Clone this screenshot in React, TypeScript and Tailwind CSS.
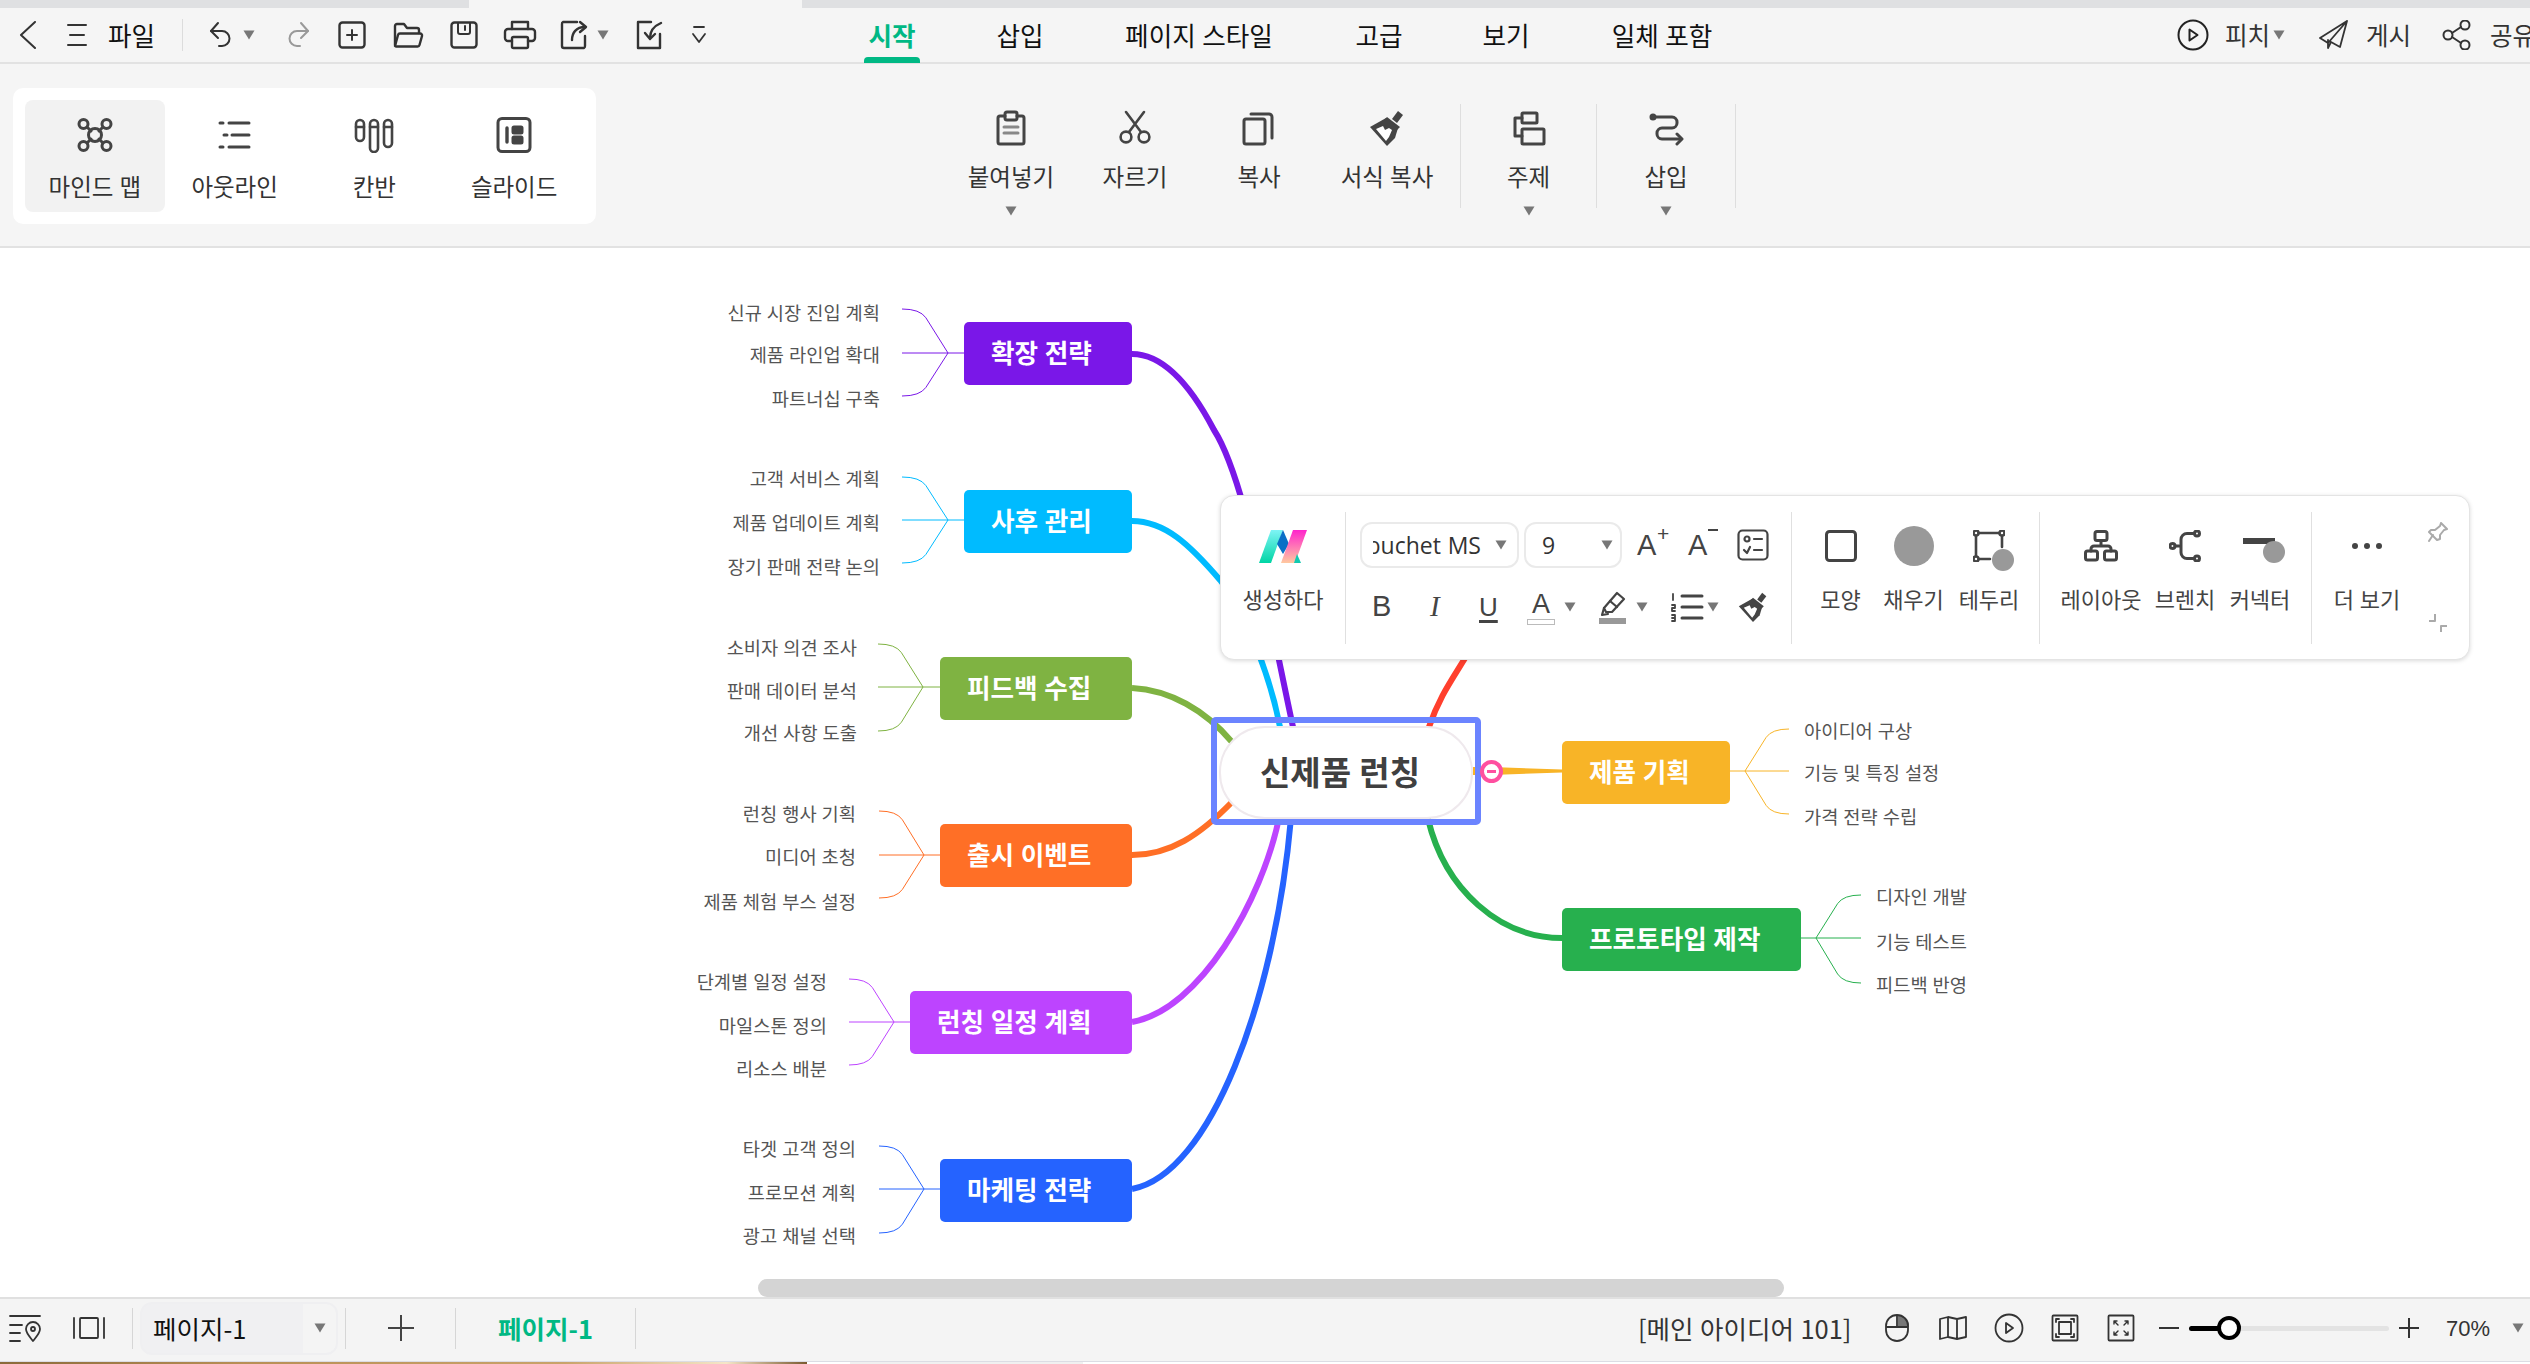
import React from "react";

const Caret = ({ className = "" }: { className?: string }) => (
  <svg viewBox="0 0 12 10" className={"w-[12px] h-[10px] shrink-0 " + className}>
    <path d="M0.5 0.5H11.5L6 9.5Z" fill="#777" />
  </svg>
);

type IP = { className?: string; children: React.ReactNode; w?: number; h?: number; stroke?: string; sw?: number };
const I = ({ className = "", children, w = 36, h = 36, stroke = "#444", sw = 2.4 }: IP) => (
  <svg viewBox={`0 0 ${w} ${h}`} width={w} height={h} fill="none" stroke={stroke} strokeWidth={sw} strokeLinecap="round" strokeLinejoin="round" className={"shrink-0 " + className}>
    {children}
  </svg>
);

const MindIcon = () => (
  <I sw={3}>
    <circle cx="18" cy="18" r="6.500" />
    <circle cx="6.500" cy="7" r="4.500" /><circle cx="29.500" cy="7" r="4.500" /><circle cx="6.500" cy="29" r="4.500" /><circle cx="29.500" cy="29" r="4.500" />
    <path d="M10 10l4 4M26 10l-4 4M10 26l4-4M26 26l-4-4" />
  </I>
);
const OutlineIcon = () => (
  <I>
    <g stroke="#444" strokeWidth="3">
      <path d="M3 6h3M12 6h20M7 18h3M15 18h17M3 30h3M12 30h20" />
    </g>
  </I>
);
const KanbanIcon = () => (
  <I w={42} sw={2.600}>
    <rect x="3" y="3" width="8" height="21" rx="4" /><rect x="17" y="3" width="8" height="32" rx="4" /><rect x="31" y="3" width="8" height="27" rx="4" />
    <path d="M3 10h8M17 10h8M31 10h8" />
  </I>
);
const SlideIcon = () => (
  <I sw={3}>
    <rect x="2" y="1.500" width="32" height="33" rx="4" />
    <path d="M11 11v14" strokeWidth="3.400" />
    <rect x="17" y="10" width="9" height="6" fill="#444" rx="1" /><rect x="17" y="20" width="9" height="6" fill="#444" rx="1" />
  </I>
);
const PasteIcon = () => (
  <I sw={3}>
    <path d="M12 6H7a2 2 0 0 0-2 2v24a2 2 0 0 0 2 2h22a2 2 0 0 0 2-2V8a2 2 0 0 0-2-2h-5" />
    <rect x="12" y="2" width="12" height="8" rx="2" />
    <path d="M11 17h14M11 23h14" stroke="#888" />
  </I>
);
const CutIcon = () => (
  <I sw={2.600}>
    <circle cx="9" cy="27" r="5.400" /><circle cx="27" cy="27" r="5.400" />
    <path d="M12 22L27 2M24 22L9 2" />
  </I>
);
const CopyIcon = () => (
  <I sw={3}>
    <rect x="3" y="9" width="21" height="25" rx="2" />
    <path d="M10 4h18a3 3 0 0 1 3 3v21" />
  </I>
);
const BrushIcon = ({ size = 36 }: { size?: number }) => (
  <svg viewBox="0 0 36 36" width={size} height={size} className="shrink-0">
    <path d="M29 1l5 4-6 8-5-4z" fill="#444" />
    <path d="M18 7l13 10-3 3L15 10z" fill="#444" />
    <path d="M1 17L17 8l12 10-3 10-8 8z" fill="#444" />
    <path d="M7 19l7-3 2 4 4-2 3 2-3 7-3 4z" fill="#fff" />
  </svg>
);
const TopicIcon = () => (
  <I sw={3}>
    <rect x="11" y="3" width="15" height="10" rx="1" />
    <rect x="11" y="19" width="22" height="15" rx="1" stroke="#444" />
    <path d="M11 8H4v18h7" />
  </I>
);
const InsertIcon = () => (
  <I sw={3}>
    <circle cx="5" cy="7" r="2" fill="#444" />
    <path d="M5 7h19a5 5 0 0 1 5 5v1a5 5 0 0 1-5 5H14a5 5 0 0 0-5 5v1a5 5 0 0 0 5 5h18" />
    <path d="M29 24l5 5-5 5" />
  </I>
);

const ribbonModes = [
  { label: "마인드 맵", icon: <MindIcon />, box: "bg-[#f2f2f2]" },
  { label: "아웃라인", icon: <OutlineIcon />, box: "" },
  { label: "칸반", icon: <KanbanIcon />, box: "" },
  { label: "슬라이드", icon: <SlideIcon />, box: "" },
];

const Tool = ({ w, icon, label, caret }: { w: string; icon: React.ReactNode; label: string; caret?: boolean }) => (
  <div className={"flex flex-col items-center " + w}>
    <div className="h-[48px] flex items-center justify-center">{icon}</div>
    <div className="h-[52px] flex items-center pb-[3px] text-[23.500px] text-[#333] whitespace-nowrap">{label}</div>
    <div className="h-[14px] flex items-center">{caret && <Caret />}</div>
  </div>
);
const VDiv = () => <div className="w-[1px] h-[104px] bg-[#dedede] shrink-0" />;

const Tab = ({ w, ml, label, active }: { w: string; ml: string; label: string; active?: boolean }) => (
  <div className={`relative h-[54px] flex items-center justify-center whitespace-nowrap text-[25.600px] ${w} ${ml} ${active ? "text-[#00b884] font-bold" : "text-[#111]"}`}>
    {label}
    {active && <div className="absolute left-0 right-0 bottom-[-1px] h-[6px] rounded-t-[4px] bg-[#00b884]" />}
  </div>
);

const TitleBar = () => (
  <div className="h-[56px] shrink-0 bg-[#f5f5f5] border-b-2 border-[#e2e2e2] flex items-center">
    <div className="w-[56px] flex justify-center">
      <I w={20} h={28} stroke="#333" sw={2}><path d="M17 1L3 14l14 13" /></I>
    </div>
    <div className="w-[42px] flex justify-center">
      <I w={22} h={24} stroke="#333" sw={2}><path d="M2 2h18M4 12h14M2 22h18" /></I>
    </div>
    <div className="ml-[10px] w-[48px] text-[25.600px] text-[#111] whitespace-nowrap">파일</div>
    <div className="ml-[26px] w-[1px] h-[32px] bg-[#dcdcdc]" />
    <div className="ml-[19px] w-[40px] flex justify-center">
      <I w={28} h={28} stroke="#333" sw={2}><path d="M10 2L3 10l7 7" /><path d="M3 10h11a7.500 7.500 0 0 1 0 15h-3" /></I>
    </div>
    <Caret className="mx-[1px]" />
    <div className="ml-[21px] w-[40px] flex justify-center">
      <I w={28} h={28} stroke="#999" sw={2}><path d="M18 2l7 8-7 7" /><path d="M25 10H14a7.500 7.500 0 0 0 0 15h3" /></I>
    </div>
    <div className="ml-[15px] flex gap-[16px] items-center">
      <div className="w-[40px] flex justify-center">
        <I w={28} h={28} stroke="#333"><rect x="1.500" y="1.500" width="25" height="25" rx="3" /><path d="M14 9v10M9 14h10" strokeWidth="2" /></I>
      </div>
      <div className="w-[40px] flex justify-center">
        <I w={32} h={28} stroke="#333"><path d="M3 24V5a2 2 0 0 1 2-2h7l3 4h10a2 2 0 0 1 2 2v3" /><path d="M3 25l3-11a2 2 0 0 1 2-1.500h20a2 2 0 0 1 2 2.500l-2.500 9a2 2 0 0 1-2 1.500H5a2 2 0 0 1-2-.5z" /></I>
      </div>
      <div className="w-[40px] flex justify-center">
        <I w={28} h={28} stroke="#333"><rect x="1.500" y="1.500" width="25" height="25" rx="3" /><path d="M8 2v9a2 2 0 0 0 2 2h8a2 2 0 0 0 2-2V2M15 5v4" strokeWidth="2" /></I>
      </div>
      <div className="w-[40px] flex justify-center">
        <I w={34} h={30} stroke="#333"><path d="M9 9V2h16v7" /><path d="M9 21H5a3 3 0 0 1-3-3v-6a3 3 0 0 1 3-3h24a3 3 0 0 1 3 3v6a3 3 0 0 1-3 3h-4" /><rect x="9" y="17" width="16" height="11" rx="1.500" /></I>
      </div>
      <div className="w-[40px] flex justify-center">
        <I w={32} h={30} stroke="#333"><path d="M17 2H3a2 2 0 0 0-1 2v22a2 2 0 0 0 2 2h20a2 2 0 0 0 1-2V16" /><path d="M12 20c0-7 4-13 13-13" /><path d="M20 2l6 5-6 5" /></I>
      </div>
    </div>
    <Caret className="ml-[1px] mr-[3px]" />
    <div className="ml-[18px] w-[40px] flex justify-center">
      <I w={30} h={30} stroke="#333"><path d="M16 2H3v26h22V14" /><path d="M26 3c-7 3-11 7-11 15" /><path d="M10 13l5 6 5-5" /></I>
    </div>
    <div className="ml-[17px] w-[24px] flex justify-center">
      <I w={16} h={20} stroke="#333" sw={1.800}><path d="M3 2h10M2 9l6 8 6-8" /></I>
    </div>
    <Tab w="w-[56px]" ml="ml-[153px]" label="시작" active />
    <Tab w="w-[56px]" ml="ml-[72px]" label="삽입" />
    <Tab w="w-[160px]" ml="ml-[71px]" label="페이지 스타일" />
    <Tab w="w-[56px]" ml="ml-[72px]" label="고급" />
    <Tab w="w-[56px]" ml="ml-[71px]" label="보기" />
    <Tab w="w-[110px]" ml="ml-[73px]" label="일체 포함" />
    <div className="ml-auto w-[353px] flex items-center text-[24.500px] text-[#333] whitespace-nowrap overflow-hidden">
      <I w={32} h={32} stroke="#222" sw={2}><circle cx="16" cy="16" r="14.500" /><path d="M12.500 10.500v11l8-5.500z" /></I>
      <span className="ml-[16px] w-[44px]">피치</span>
      <Caret className="ml-[4px]" />
      <div className="ml-[34px] w-[30px] flex justify-center">
        <I w={30} h={30} stroke="#333" sw={1.800}><path d="M28 1L1 18l8 5 19-22-7 26-9-5-3 6v-8" /></I>
      </div>
      <span className="ml-[17px] w-[44px]">게시</span>
      <div className="ml-[32px] w-[30px] flex justify-center">
        <I w={30} h={30} stroke="#333" sw={2}><circle cx="6" cy="15" r="4.500" /><circle cx="23" cy="5" r="4.500" /><circle cx="23" cy="25" r="4.500" /><path d="M10 13l9-6M10 17l9 6" /></I>
      </div>
      <span className="ml-[18px]">공유</span>
    </div>
  </div>
);

const Ribbon = () => (
  <div className="h-[184px] shrink-0 bg-[#f5f5f5] border-b-2 border-[#e2e2e2] flex items-start pt-[24px]">
    <div className="ml-[13px] w-[583px] h-[136px] bg-white rounded-[10px] p-[12px] flex">
      {ribbonModes.map((m) => (
        <div key={m.label} className={"w-[140px] h-[112px] rounded-[8px] flex flex-col items-center " + m.box}>
          <div className="h-[70px] flex items-center justify-center">{m.icon}</div>
          <div className="h-[36px] flex items-center pb-[3px] text-[23.500px] text-[#333] whitespace-nowrap">{m.label}</div>
        </div>
      ))}
    </div>
    <div className="ml-[353px] mt-[16px] flex items-start">
      <Tool w="w-[124px]" icon={<PasteIcon />} label="붙여넣기" caret />
      <Tool w="w-[124px]" icon={<CutIcon />} label="자르기" />
      <Tool w="w-[124px]" icon={<CopyIcon />} label="복사" />
      <Tool w="w-[132px]" icon={<BrushIcon />} label="서식 복사" />
      <div className="ml-[7px]"><VDiv /></div>
      <Tool w="w-[135px]" icon={<TopicIcon />} label="주제" caret />
      <VDiv />
      <Tool w="w-[138px]" icon={<InsertIcon />} label="삽입" caret />
      <VDiv />
    </div>
  </div>
);

const nodes = [
  { t: "확장 전략", c: "left-[964px] top-[74px] w-[168px] bg-[#7a17e8]" },
  { t: "사후 관리", c: "left-[964px] top-[242px] w-[168px] bg-[#00bbff]" },
  { t: "피드백 수집", c: "left-[940px] top-[409px] w-[192px] bg-[#7fb342]" },
  { t: "출시 이벤트", c: "left-[940px] top-[576px] w-[192px] bg-[#ff6f26]" },
  { t: "런칭 일정 계획", c: "left-[910px] top-[743px] w-[222px] bg-[#bd44ff]" },
  { t: "마케팅 전략", c: "left-[940px] top-[911px] w-[192px] bg-[#2563ff]" },
  { t: "제품 기획", c: "left-[1562px] top-[493px] w-[168px] bg-[#f8b427]" },
  { t: "프로토타입 제작", c: "left-[1562px] top-[660px] w-[239px] bg-[#27b04e]" },
];

const subs = [
  { t: "신규 시장 진입 계획", c: "right-[1650px] top-[52px]" },
  { t: "제품 라인업 확대", c: "right-[1650px] top-[94px]" },
  { t: "파트너십 구축", c: "right-[1650px] top-[138px]" },
  { t: "고객 서비스 계획", c: "right-[1650px] top-[218px]" },
  { t: "제품 업데이트 계획", c: "right-[1650px] top-[262px]" },
  { t: "장기 판매 전략 논의", c: "right-[1650px] top-[306px]" },
  { t: "소비자 의견 조사", c: "right-[1673px] top-[387px]" },
  { t: "판매 데이터 분석", c: "right-[1673px] top-[430px]" },
  { t: "개선 사항 도출", c: "right-[1673px] top-[472px]" },
  { t: "런칭 행사 기획", c: "right-[1674px] top-[553px]" },
  { t: "미디어 초청", c: "right-[1674px] top-[596px]" },
  { t: "제품 체험 부스 설정", c: "right-[1674px] top-[641px]" },
  { t: "단계별 일정 설정", c: "right-[1703px] top-[721px]" },
  { t: "마일스톤 정의", c: "right-[1703px] top-[765px]" },
  { t: "리소스 배분", c: "right-[1703px] top-[808px]" },
  { t: "타겟 고객 정의", c: "right-[1674px] top-[888px]" },
  { t: "프로모션 계획", c: "right-[1674px] top-[932px]" },
  { t: "광고 채널 선택", c: "right-[1674px] top-[975px]" },
  { t: "아이디어 구상", c: "left-[1804px] top-[470px]" },
  { t: "기능 및 특징 설정", c: "left-[1804px] top-[512px]" },
  { t: "가격 전략 수립", c: "left-[1804px] top-[556px]" },
  { t: "디자인 개발", c: "left-[1876px] top-[636px]" },
  { t: "기능 테스트", c: "left-[1876px] top-[681px]" },
  { t: "피드백 반영", c: "left-[1876px] top-[724px]" },
];

const branches = [
  { d: "M1132 354C1165 354 1192 388 1214 430C1245 478 1270 620 1293 727", s: "#7a17e8" },
  { d: "M1132 521C1165 521 1190 545 1220 580C1240 605 1268 665 1280 727", s: "#00bbff" },
  { d: "M1132 688C1170 690 1205 710 1232 742", s: "#7fb342" },
  { d: "M1132 855C1170 855 1200 835 1232 802", s: "#ff6f26" },
  { d: "M1132 1022C1200 1010 1262 900 1279 818", s: "#bd44ff" },
  { d: "M1132 1189C1210 1175 1275 1000 1291 818", s: "#2563ff" },
  { d: "M1429 727C1440 695 1452 680 1470 650", s: "#ff3f2d" },
  { d: "M1428 819C1445 890 1500 938 1562 938", s: "#27b04e" },
];

const forks = [
  { from: 964, fork: 948, end: 902, cy: 353, a: 309, b: 396, s: "#7a17e8" },
  { from: 964, fork: 948, end: 902, cy: 520, a: 477, b: 563, s: "#00bbff" },
  { from: 940, fork: 923, end: 878, cy: 687, a: 644, b: 731, s: "#7fb342" },
  { from: 940, fork: 924, end: 879, cy: 855, a: 811, b: 898, s: "#ff6f26" },
  { from: 910, fork: 894, end: 849, cy: 1022, a: 979, b: 1065, s: "#bd44ff" },
  { from: 940, fork: 924, end: 879, cy: 1189, a: 1146, b: 1233, s: "#2563ff" },
  { from: 1730, fork: 1745, end: 1789, cy: 771, a: 729, b: 814, s: "#f8b427" },
  { from: 1801, fork: 1816, end: 1861, cy: 938, a: 895, b: 983, s: "#27b04e" },
];

const forkPath = (f: (typeof forks)[number]) => {
  const span = f.fork - f.end;
  const tip = (y: number) =>
    `M${f.end} ${y}Q${f.end + span * 0.39} ${y} ${f.end + span * 0.52} ${y + (f.cy - y) * 0.2}L${f.fork} ${f.cy}`;
  return `M${f.from} ${f.cy}L${f.end} ${f.cy}${tip(f.a)}${tip(f.b)}`;
};

const TBtn = ({ label, w, children }: { label: string; w: string; children: React.ReactNode }) => (
  <div className={"flex flex-col items-center shrink-0 " + w}>
    <div className="h-[74px] flex items-center justify-center">{children}</div>
    <div className="h-[34px] flex items-center pb-[3px] text-[22px] text-[#444] whitespace-nowrap">{label}</div>
  </div>
);
const GreyDot = ({ className }: { className: string }) => <div className={"absolute rounded-full bg-[#999] " + className} />;

const FloatBar = () => (
  <div className="absolute left-[1220px] top-[247px] w-[1250px] h-[165px] bg-white rounded-[14px] border border-[#e4e4e4] shadow-[0_1px_4px_rgba(0,0,0,0.15)] flex items-start pt-[16px]">
    <TBtn label="생성하다" w="w-[124px] -mt-[3px]">
      <svg viewBox="0 0 48 33" width="48" height="33">
        <defs>
          <linearGradient id="g1" x1="0" y1="0" x2="0" y2="1"><stop offset="0" stopColor="#7ef4f6" /><stop offset="1" stopColor="#00d5a4" /></linearGradient>
          <linearGradient id="g2" x1="0" y1="0" x2="0" y2="1"><stop offset="0" stopColor="#ff24cc" /><stop offset="1" stopColor="#ffc9a0" /></linearGradient>
        </defs>
        <path d="M12 0H24L12 33H0Z" fill="url(#g1)" />
        <path d="M24 0L30 14L24 24L18 14Z" fill="#0b6fc6" />
        <path d="M34 0H48L36 33H22Z" fill="url(#g2)" />
        <path d="M38 24L42 33H35Z" fill="#12c9b0" />
      </svg>
    </TBtn>
    <div className="w-[1px] h-[132px] bg-[#e0e0e0] shrink-0" />
    <div className="w-[445px] shrink-0 pl-[14px]">
      <div className="h-[46px] mt-[10px] flex items-center">
        <div className="w-[159px] h-[46px] rounded-[12px] border-2 border-[#eaeaea] flex items-center pl-[11px]">
          <div className="w-[108px] overflow-hidden flex justify-end text-[23px] text-[#333] font-['Open_Sans',sans-serif] whitespace-nowrap">Trebuchet MS</div>
          <Caret className="ml-[14px]" />
        </div>
        <div className="ml-[5px] w-[98px] h-[46px] rounded-[12px] border-2 border-[#eaeaea] flex items-center pl-[16px]">
          <div className="w-[60px] text-[23px] text-[#333] font-['Open_Sans',sans-serif]">9</div>
          <Caret className="-ml-[1px]" />
        </div>
        <div className="ml-[15px] relative w-[36px] text-[#444] text-[29px] font-['Liberation_Sans',sans-serif] leading-none">
          A<span className="absolute left-[20px] -top-[8px] text-[21px]">+</span>
        </div>
        <div className="ml-[15px] relative w-[36px] text-[#444] text-[29px] font-['Liberation_Sans',sans-serif] leading-none">
          A<div className="absolute left-[20px] -top-[2px] w-[10px] h-[2px] bg-[#444]" />
        </div>
        <div className="ml-[13px]">
          <I w={32} h={32} stroke="#444" sw={2.200}><rect x="1.500" y="1.500" width="29" height="29" rx="4" /><circle cx="10" cy="10" r="2.500" /><path d="M17 10h8M7 21l3 3 3-6M17 21h8" /></I>
        </div>
      </div>
      <div className="h-[46px] mt-[16px] flex items-center font-['Liberation_Sans',sans-serif] text-[#444]">
        <span className="ml-[12px] w-[18px] text-[29px]">B</span>
        <span className="ml-[40px] w-[10px] text-[29px] italic font-['Liberation_Serif',serif]">I</span>
        <span className="ml-[39px] w-[22px] text-[26px] underline underline-offset-[4px] decoration-[3px]">U</span>
        <div className="ml-[26px] w-[28px] flex flex-col items-center">
          <span className="text-[27px] leading-[28px]">A</span>
          <div className="w-[28px] h-[6px] border border-[#bbb] mt-[1px]" />
        </div>
        <Caret className="ml-[9px]" />
        <div className="ml-[23px] w-[27px] flex flex-col items-center">
          <I w={26} h={26} sw={2.200}><path d="M17 2l7 6-12 13H6L4 17z" /><path d="M4 17l-2 7 6-1" /><path d="M10 10l7 6" /></I>
          <div className="w-[27px] h-[6px] bg-[#999] mt-[1px]" />
        </div>
        <Caret className="ml-[10px]" />
        <div className="ml-[22px] w-[34px] flex justify-center">
          <I w={34} h={30} sw={3}><path d="M12 4h20M12 15h20M12 26h20" /><path d="M3 2v6M2 13h3v3H2v3h3M2 23h3v6H2M2 26h3" strokeWidth="1.800" /></I>
        </div>
        <Caret className="ml-[3px]" />
        <div className="ml-[19px]"><BrushIcon size={30} /></div>
      </div>
    </div>
    <div className="w-[1px] h-[132px] bg-[#e0e0e0] shrink-0" />
    <div className="w-[247px] shrink-0 flex pl-[12px]">
      <TBtn label="모양" w="w-[73px] -mt-[3px]">
        <I w={32} h={32} sw={3}><rect x="1.500" y="1.500" width="29" height="29" rx="3" /></I>
      </TBtn>
      <TBtn label="채우기" w="w-[73px] -mt-[3px]">
        <div className="w-[40px] h-[40px] rounded-full bg-[#999]" />
      </TBtn>
      <TBtn label="테두리" w="w-[78px] -mt-[3px]">
        <div className="relative w-[32px] h-[32px]">
          <I w={32} h={32} sw={2.600}><path d="M3 3h26M3 3v26M3 29h14M29 3v14" /><circle cx="3" cy="3" r="2.500" fill="#fff" /><circle cx="29" cy="3" r="2.500" fill="#fff" /><circle cx="3" cy="29" r="2.500" fill="#fff" /></I>
          <GreyDot className="left-[19px] top-[19px] w-[22px] h-[22px]" />
        </div>
      </TBtn>
    </div>
    <div className="w-[1px] h-[132px] bg-[#e0e0e0] shrink-0" />
    <div className="w-[271px] shrink-0 flex pl-[19px]">
      <TBtn label="레이아웃" w="w-[84px] -mt-[3px]">
        <I w={34} h={32} sw={3}><rect x="11" y="1.500" width="12" height="9" rx="2" /><rect x="1.500" y="21" width="12" height="9" rx="2" /><rect x="20.500" y="21" width="12" height="9" rx="2" /><path d="M17 11v5M7 21v-2a3 3 0 0 1 3-3h14a3 3 0 0 1 3 3v2" /></I>
      </TBtn>
      <TBtn label="브렌치" w="w-[84px] -mt-[3px]">
        <I w={32} h={32} sw={3}><circle cx="3.500" cy="16" r="2.500" /><circle cx="28" cy="3.500" r="2.500" /><circle cx="28" cy="28.500" r="2.500" /><path d="M6 16h4M25 3.500h-7a6 6 0 0 0-6 6v13a6 6 0 0 0 6 6h7" /></I>
      </TBtn>
      <TBtn label="커넥터" w="w-[66px] -mt-[3px]">
        <div className="relative w-[34px] h-[32px]">
          <div className="absolute left-0 top-[8px] w-[32px] h-[6px] bg-[#444]" />
          <GreyDot className="left-[20px] top-[11px] w-[22px] h-[22px]" />
        </div>
      </TBtn>
    </div>
    <div className="w-[1px] h-[132px] bg-[#e0e0e0] shrink-0" />
    <div className="w-[110px] shrink-0 flex">
      <TBtn label="더 보기" w="w-[110px] -mt-[3px]">
        <I w={32} h={10}><g stroke="none" fill="#444"><circle cx="4" cy="5" r="3" /><circle cx="16" cy="5" r="3" /><circle cx="28" cy="5" r="3" /></g></I>
      </TBtn>
    </div>
    <div className="absolute left-[1207px] top-[26px]">
      <I w={20} h={20} stroke="#aaa" sw={2}><path d="M13 1l6 6-3 1-4 5 0 4-3 1-8-8 2-2 4 0 5-4z" /><path d="M5 13L1 19" /></I>
    </div>
    <div className="absolute left-[1207px] top-[118px]">
      <I w={20} h={20} stroke="#aaa" sw={2}><path d="M7 0v7H1M13 18v-6h6" strokeLinecap="butt" /></I>
    </div>
  </div>
);

const Canvas = () => (
  <div className="relative flex-1 bg-white overflow-hidden">
    <svg viewBox="0 248 2530 1049" className="absolute left-0 top-0 w-[2530px] h-[1049px]" fill="none">
      {branches.map((b) => (
        <path key={b.d} d={b.d} stroke={b.s} strokeWidth="6" />
      ))}
      {forks.map((f) => (
        <path key={f.cy + f.s} d={forkPath(f)} stroke={f.s} strokeWidth="1" />
      ))}
    </svg>
    {subs.map((s) => (
      <div key={s.t} className={"absolute h-[26px] leading-[24px] text-[18.700px] text-[#555] whitespace-nowrap " + s.c}>{s.t}</div>
    ))}
    {nodes.map((n) => (
      <div key={n.t} className={"absolute h-[63px] rounded-[5px] flex items-center pl-[27px] pb-[2px] text-[25.600px] font-bold text-white whitespace-nowrap " + n.c}>{n.t}</div>
    ))}
    <div className="absolute left-[1219px] top-[478px] w-[254px] h-[93px] rounded-[46px] bg-white border-2 border-[#efe9ed] flex items-center pl-[39px] pb-[2px] text-[33px] font-bold text-[#404040] whitespace-nowrap">신제품 런칭</div>
    <svg viewBox="0 248 2530 1049" className="absolute left-0 top-0 w-[2530px] h-[1049px]" fill="none">
      <polygon points="1473,767 1491,767 1562,769.500 1562,772.500 1491,775 1473,775" fill="#f8b427" />
    </svg>
    <div className="absolute left-[1211px] top-[469px] w-[270px] h-[108px] rounded-[5px] border-[6px] border-[#6b84ff]" />
    <div className="absolute left-[1480px] top-[512px] w-[23px] h-[23px] rounded-full bg-white border-[4px] border-[#ff4fa0] flex items-center justify-center">
      <div className="w-[9px] h-[3px] bg-[#ff4fa0]" />
    </div>
    <FloatBar />
    <div className="absolute left-[758px] top-[1031px] w-[1026px] h-[18px] rounded-[9px] bg-[#d4d4d4]" />
  </div>
);

const BottomBar = () => (
  <div className="h-[64px] shrink-0 bg-[#f4f4f4] border-t-2 border-[#e0e0e0] flex items-center pb-[4px] text-[#333]">
    <div className="w-[50px] flex justify-center">
      <I w={34} h={28} stroke="#333" sw={1.800}><path d="M2 2h30M2 11h12M2 19h10M2 27h10" /><path d="M25 27c-4-5-7-8-7-12a7 7 0 0 1 14 0c0 4-3 7-7 12z" /><circle cx="25" cy="15" r="2" /></I>
    </div>
    <div className="w-[78px] flex justify-center">
      <I w={34} h={24} stroke="#333" sw={1.800}><path d="M2 2v20M32 2v20" /><rect x="8" y="2" width="18" height="20" rx="1" /></I>
    </div>
    <div className="ml-[4px] w-[1px] h-[41px] bg-[#d6d6d6]" />
    <div className="ml-[7px] w-[198px] h-[53px] rounded-[12px] border-2 border-[#efeff1] bg-[#f0f0f2] flex items-center pl-[11px] text-[25.500px] text-[#111] whitespace-nowrap overflow-hidden">
      <span className="w-[152px]">페이지-1</span>
      <div className="w-[33px] h-[49px] bg-[#f4f4f4] flex items-center justify-center">
        <Caret />
      </div>
    </div>
    <div className="ml-[7px] w-[1px] h-[41px] bg-[#d6d6d6]" />
    <div className="w-[109px] flex justify-center">
      <I w={28} h={28} stroke="#444" sw={2}><path d="M14 1v26M1 14h26" strokeLinecap="butt" /></I>
    </div>
    <div className="w-[1px] h-[41px] bg-[#d6d6d6]" />
    <div className="w-[179px] text-center text-[25.500px] font-bold text-[#00b884] whitespace-nowrap">페이지-1</div>
    <div className="w-[1px] h-[41px] bg-[#d6d6d6]" />
    <div className="ml-auto w-[892px] flex items-center whitespace-nowrap">
      <span className="w-[209px] text-[25.500px] text-[#333]">[메인 아이디어 101]</span>
      <div className="ml-[22px] w-[56px] flex justify-center">
        <svg viewBox="0 0 26 28" width="26" height="28" fill="none" stroke="#333" strokeWidth="1.800"><path d="M14 1h0a11 10 0 0 1 11 10v2H14z" fill="#777" stroke="none" /><rect x="2" y="1" width="22" height="26" rx="11" /><path d="M2 13h22M13 1v12" /></svg>
      </div>
      <div className="w-[56px] flex justify-center">
        <I w={30} h={26} stroke="#333" sw={1.800}><path d="M2 4l8-2 9 2 9-2v20l-9 2-9-2-8 2zM10 2v20M19 4v20" /></I>
      </div>
      <div className="w-[56px] flex justify-center">
        <I w={30} h={30} stroke="#333" sw={1.800}><circle cx="15" cy="15" r="13.500" /><path d="M12 10v10l7-5z" /></I>
      </div>
      <div className="w-[56px] flex justify-center">
        <I w={28} h={28} stroke="#333" sw={1.800}><rect x="1.500" y="1.500" width="25" height="25" rx="1" /><rect x="8" y="8" width="12" height="12" /><path d="M5 8V5h3M20 5h3v3M23 20v3h-3M8 23H5v-3" /></I>
      </div>
      <div className="w-[56px] flex justify-center">
        <I w={28} h={28} stroke="#333" sw={1.800}><rect x="1.500" y="1.500" width="25" height="25" rx="1" /><path d="M7 7l4 4M7 7h3M7 7v3M21 7l-4 4M21 7h-3M21 7v3M7 21l4-4M7 21h3M7 21v-3M21 21l-4-4M21 21h-3M21 21v-3" strokeWidth="1.400" /></I>
      </div>
      <div className="ml-[10px] w-[20px] h-[2px] bg-[#333]" />
      <div className="ml-[10px] relative w-[200px] h-[5px] rounded-full bg-[#e3e3e3]">
        <div className="absolute left-0 top-0 w-[40px] h-[5px] rounded-full bg-black" />
        <div className="absolute left-[28px] top-[-10px] w-[24px] h-[24px] rounded-full bg-white border-[4px] border-black" />
      </div>
      <div className="ml-[10px] w-[20px] flex justify-center">
        <I w={20} h={20} stroke="#333" sw={2}><path d="M10 0v20M0 10h20" strokeLinecap="butt" /></I>
      </div>
      <span className="ml-[27px] w-[46px] text-[22px] text-[#333] font-['Liberation_Sans',sans-serif]">70%</span>
      <Caret className="ml-[20px]" />
    </div>
  </div>
);

export default function App() {
  return (
    <div className="w-[2530px] h-[1364px] overflow-hidden flex flex-col bg-white font-['Noto_Sans_CJK_KR','Noto_Sans',sans-serif] [word-spacing:0.05em]">
      <div className="h-[8px] shrink-0 bg-[#dfe0e2] flex">
        <div className="ml-[469px] w-[333px] h-[8px] bg-[#f5f5f5]" />
      </div>
      <TitleBar />
      <Ribbon />
      <Canvas />
      <BottomBar />
      <div className="h-[1px] shrink-0 bg-[#dcdce4]" />
      <div className="h-[2px] shrink-0 bg-white flex">
        <div className="w-[807px] h-[2px] bg-[linear-gradient(90deg,#8a6a3a,#b88f55_30%,#c9a36a_70%,#f5e6c8_90%,#7a5a30)]" />
        <div className="ml-[43px] w-[233px] h-[2px] bg-[#f0f0f0]" />
      </div>
    </div>
  );
}
